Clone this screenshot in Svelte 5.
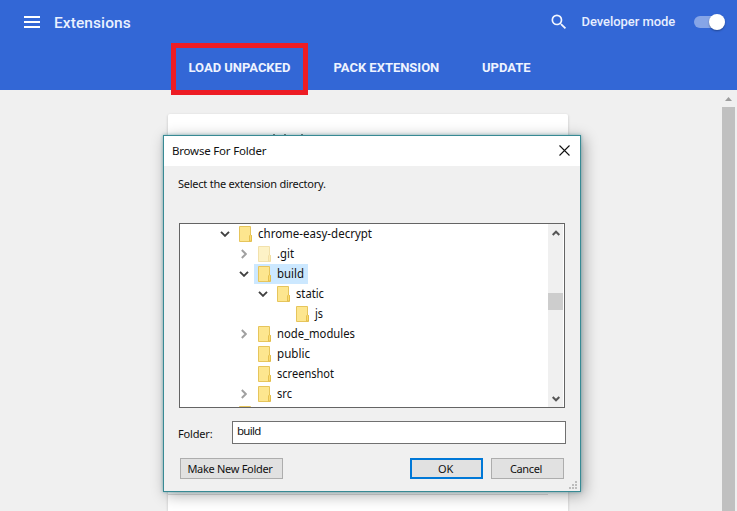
<script>
  const rows = [
    { name: 'chrome-easy-decrypt', depth: 0, state: 'open', width: 114 },
    { name: '.git', depth: 1, state: 'closed', faded: true, width: 17 },
    { name: 'build', depth: 1, state: 'open', selected: true, width: 27 },
    { name: 'static', depth: 2, state: 'open', width: 28 },
    { name: 'js', depth: 3, state: '', width: 8 },
    { name: 'node_modules', depth: 1, state: 'closed', width: 78 },
    { name: 'public', depth: 1, state: '', width: 33 },
    { name: 'screenshot', depth: 1, state: '', width: 57 },
    { name: 'src', depth: 1, state: 'closed', width: 15 },
    { name: '', depth: 0, state: '', width: 0 }
  ];
</script>

<div class="page">
  <header>
    <div class="toolbar">
      <svg class="menu" width="16" height="12" viewBox="0 0 16 12"><path d="M0 1h16M0 6h16M0 11h16" stroke="#fff" stroke-width="2" /></svg>
      <h1>Extensions</h1>
      <svg class="search" width="24" height="24" viewBox="0 0 24 24"><path fill="#f2f6ff" d="M15.5 14h-.79l-.28-.27A6.471 6.471 0 0 0 16 9.5 6.5 6.5 0 1 0 9.500 16c1.61 0 3.090-.59 4.230-1.570l.27.28v.79l5 4.990L20.490 19l-4.990-5zm-6 0C7.010 14 5 11.990 5 9.500S7.010 5 9.500 5 14 7.010 14 9.500 11.990 14 9.500 14z" /></svg>
      <span class="dev">Developer mode</span>
      <span class="toggle"><i></i></span>
    </div>
    <nav>
      <span class="load">LOAD UNPACKED</span>
      <span class="pack">PACK EXTENSION</span>
      <span class="update">UPDATE</span>
    </nav>
  </header>
  <main>
    <section class="card"><i class="peek"></i><i class="rule"></i></section>
    <aside><svg width="7" height="4" viewBox="0 0 7 4"><path d="M0 4L3.500 0L7 4Z" fill="#9d9d9d" /></svg><i></i></aside>
  </main>

  <div class="highlight"></div>

  <div class="dialog">
    <div class="title">
      <span>Browse For Folder</span>
      <svg width="11" height="11" viewBox="0 0 11 11"><path d="M.5.5l10 10M10.500.5l-10 10" stroke="#111" stroke-width="1.100" /></svg>
    </div>
    <div class="content">
      <p>Select the extension directory.</p>
      <div class="tree">
        <div class="rows">
          {#each rows as row}
            <div class="row" style:padding-left="{39 + row.depth * 19}px">
              <span class="chevron" class:closed={row.state === 'closed'}>
                {#if row.state === 'open'}
                  <svg width="10" height="6" viewBox="0 0 10 6"><path d="M1 .8L5 4.800L9 .8" fill="none" stroke="#404040" stroke-width="1.900" /></svg>
                {:else if row.state === 'closed'}
                  <svg width="6" height="10" viewBox="0 0 6 10"><path d="M.8 1L4.800 5L.8 9" fill="none" stroke="#a0a0a0" stroke-width="1.900" /></svg>
                {/if}
              </span>
              <span class="item" class:selected={row.selected}>
                <svg class:faded={row.faded} width="14" height="16" viewBox="0 0 14 16">
                  <path d="M.5.5h11v9h1v6H.5z" fill="#fde68f" stroke="#e6c55c" />
                  <path d="M10.500 15V10l1-1.500 1 1V15z" fill="#fbdc72" stroke="#e0b944" stroke-width=".8" />
                </svg>
                {#if row.name}
                  <svg class="label" width={row.width + 4} height="20"><text x="0" y="14" textLength={row.width} lengthAdjust="spacingAndGlyphs">{row.name}</text></svg>
                {/if}
              </span>
            </div>
          {/each}
        </div>
        <div class="scroll">
          <svg width="8" height="6" viewBox="0 0 8 6"><path d="M.7 5L4 1.700L7.300 5" fill="none" stroke="#555" stroke-width="2" /></svg>
          <i></i>
          <svg width="8" height="6" viewBox="0 0 8 6"><path d="M.7 1L4 4.300L7.300 1" fill="none" stroke="#555" stroke-width="2" /></svg>
        </div>
      </div>
      <div class="field"><span>Folder:</span><div class="input">build</div></div>
      <div class="buttons">
        <div class="button make">Make New Folder</div>
        <div class="button ok">OK</div>
        <div class="button cancel">Cancel</div>
      </div>
    </div>
    <svg class="grip" width="8" height="8" viewBox="0 0 8 8"><path d="M6 0h2v2H6zM3 3h2v2H3zM6 3h2v2H6zM0 6h2v2H0zM3 6h2v2H3zM6 6h2v2H6z" fill="#bdbdbd" /></svg>
  </div>
</div>

<style>
  .page { position: relative; width: 737px; height: 511px; overflow: hidden; background: #f0f0f0; font-family: Roboto, sans-serif; box-sizing: border-box; display: flex; flex-direction: column; }
  .page * { box-sizing: border-box; }
  svg { display: block; flex: none; }
  header { height: 90px; background: #3367d6; color: #fff; flex: none; }
  .toolbar { height: 44px; display: flex; align-items: center; padding-left: 24px; }
  h1 { font-size: 15.500px; font-weight: 500; margin: 2px 0 0 14px; width: 495px; letter-spacing: .08px; line-height: 20px; color: #eaf1ff; }
  .search { width: 20px; height: 20px; }
  .dev { margin: -1px 0 0 12.500px; width: 112px; font-size: 13px; font-weight: 500; letter-spacing: -.05px; white-space: nowrap; color: #e6eeff; }
  .toggle { width: 31px; height: 12px; border-radius: 6px; background: #86a5e7; display: flex; align-items: center; justify-content: flex-end; }
  .toggle i { width: 16px; height: 16px; border-radius: 50%; background: #fff; box-shadow: 0 1px 2px #0005; flex: none; }
  nav { display: flex; height: 46px; align-items: center; padding-left: 188.500px; font-size: 13px; font-weight: 700; letter-spacing: -.02px; white-space: nowrap; color: #eef3ff; }
  .load { width: 145px; }
  .pack { width: 148.500px; }
  main { flex: 1; display: flex; }
  .card { margin: 24px 0 0 168px; width: 400px; background: #fff; border-radius: 2px 2px 0 0; box-shadow: 0 1px 3px #0003; display: flex; flex-direction: column; flex: none; }
  .peek { margin: 20px 0 0 105px; width: 30px; height: 1px; background: linear-gradient(90deg, #777 2px, transparent 2px 11px, #777 11px 13px, transparent 13px 28px, #777 28px); }
  .rule { margin-top: 359px; width: 380px; height: 1px; background: #ddd; }
  aside { margin-left: auto; width: 15px; display: flex; flex-direction: column; align-items: flex-start; padding-top: 7px; }
  aside svg { margin-left: 3px; }
  aside i { margin-top: 6px; width: 13px; flex: 1; background: #c0c0c0; }
  .highlight { position: absolute; left: 171px; top: 43px; width: 137px; height: 52px; border: 5px solid #ed1c24; }
  .dialog { position: absolute; left: 163px; top: 135px; width: 418px; height: 357px; border: 1px solid #388a94; background: #f0f0f0; box-shadow: 0 0 3px #388a9499, 3px 3px 14px #0005; color: #111; font-family: "Noto Sans", sans-serif; font-size: 11px; letter-spacing: -.16px; display: flex; flex-direction: column; }
  .title { height: 30px; background: #fff; display: flex; justify-content: space-between; align-items: center; padding: 0 10px 1px 8px; font-size: 11.500px; letter-spacing: -.2px; }
  .content { padding: 9px 14px 0 15px; display: flex; flex-direction: column; }
  p { margin: 0 0 0 -1px; height: 48px; line-height: 17px; letter-spacing: -.24px; }
  .tree { height: 185px; width: 386px; border: 1px solid #646464; background: #fff; display: flex; overflow: hidden; letter-spacing: 0; }
  .rows { width: 368px; height: 183px; overflow: hidden; }
  .row { display: flex; height: 20px; align-items: center; }
  .chevron { width: 16px; display: flex; height: 20px; align-items: center; padding-left: .5px; }
  .chevron.closed { padding-left: 3px; }
  .item { height: 20px; display: flex; align-items: center; padding-left: 4px; }
  .item.selected { background: #cce8ff; }
  .faded { opacity: .5; }
  .label { margin-left: 5px; overflow: visible; font-size: 12px; fill: #111; }
  .scroll { width: 15px; height: 183px; background: #f0f0f0; display: flex; flex-direction: column; align-items: center; padding: 6px 0 5px; }
  .scroll i { width: 15px; height: 17px; margin: 57px 0 auto; background: #cdcdcd; }
  .field { display: flex; margin-top: 13px; height: 23px; }
  .field span { width: 54px; margin-left: -1px; line-height: 26px; }
  .input { width: 334px; flex: none; border: 1px solid #707070; background: #fff; padding-left: 4px; line-height: 18px; letter-spacing: -.7px; font-size: 11.500px; }
  .buttons { display: flex; margin: 14px 0 0 1px; height: 21px; }
  .button { background: #e1e1e1; border: 1px solid #adadad; width: 73px; display: flex; align-items: center; justify-content: center; white-space: nowrap; }
  .make { width: 103px; padding-right: 3px; letter-spacing: -.3px; }
  .ok { margin-left: 127px; border: 2px solid #0078d7; padding-right: 2px; }
  .cancel { margin-left: 8px; padding-right: 3px; letter-spacing: -.35px; }
  .grip { position: absolute; right: 3px; bottom: 2px; }
</style>
